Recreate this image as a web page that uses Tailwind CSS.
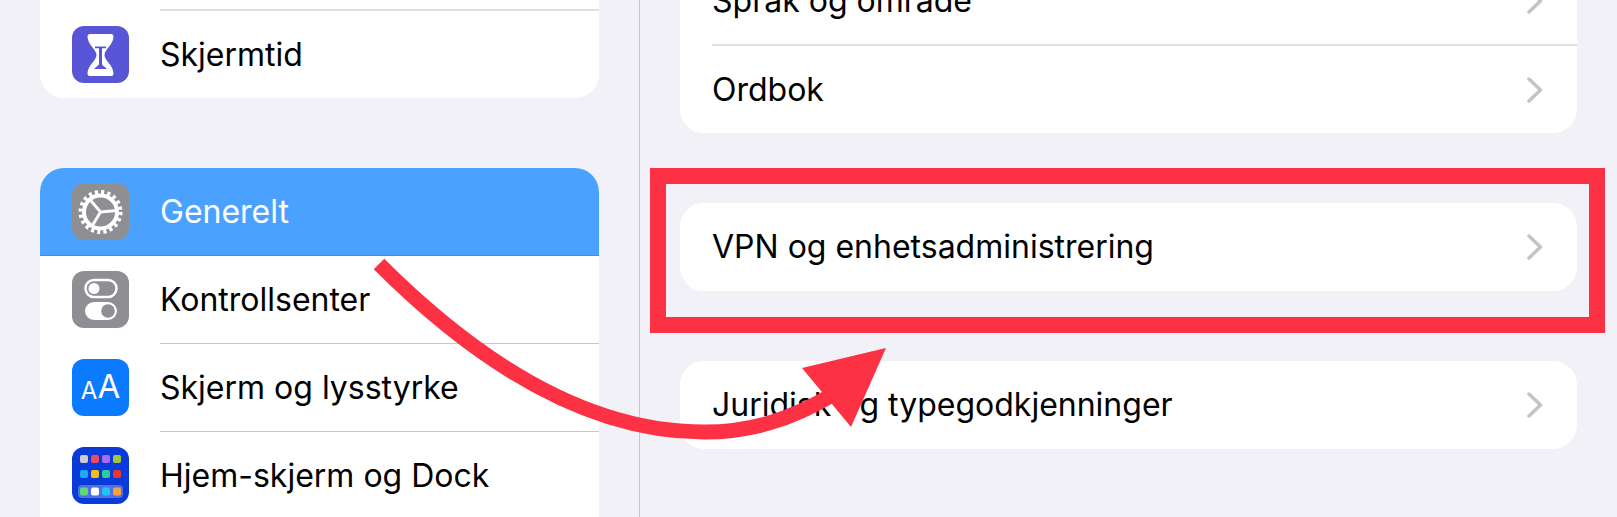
<!DOCTYPE html>
<html lang="nb">
<head>
<meta charset="UTF-8"/>
<title>Innstillinger</title>
<script src="https://cdn.jsdelivr.net/npm/@tailwindcss/browser@4"></script>
</head>
<body class="bg-[#f2f1f7]">
<div class="relative flex w-[1617px] h-[517px] overflow-hidden bg-[#f2f1f7] font-['Inter',sans-serif] text-[32px] text-black">

    <!-- sidebar -->
    <div class="w-[640px] h-full shrink-0 border-r border-[#c6c6c8] px-[40px] flex flex-col gap-[70px]">
        <div class="-mt-[78px] bg-white rounded-b-[24px] w-[559px]">
            <div class="h-[89px] border-b-2 border-[#dfdfe1] ml-[120px]"></div>
            <div class="h-[87px] flex items-center pl-[32px] gap-[31px]">
                <svg class="w-[57px] h-[57px] shrink-0" viewBox="0 0 57 57">
                    <rect width="57" height="57" rx="12" fill="#5856d6"/>
                    <path d="M18 8h21a2.500 2.500 0 0 1 2.500 2.500c0 8-9 13-9 18.500s9 10.500 9 18.500a2.500 2.500 0 0 1-2.500 2.500h-21a2.500 2.500 0 0 1-2.500-2.500c0-8 9-13 9-18.500s-9-10.500-9-18.500a2.500 2.500 0 0 1 2.500-2.500z" fill="#fff"/>
                    <path d="M23 20.500h11v1.800h-4v15.500c0 2 3 3 5 5.200h-13c2-2.200 5-3.200 5-5.200v-15.500h-4z" fill="#5856d6"/>
                </svg>
                <span>Skjermtid</span>
            </div>
        </div>

        <div class="bg-white rounded-t-[24px] w-[559px] overflow-hidden">
            <div class="h-[88px] flex items-center pl-[32px] gap-[31px] bg-[#4ba1ff] border-b border-[#3a90e8] text-white">
                <svg class="w-[57px] h-[57px] shrink-0" viewBox="0 0 57 57">
                    <rect width="57" height="57" rx="12" fill="#8e8e93"/>
                    <circle cx="28.500" cy="29" r="19.500" fill="none" stroke="#fff" stroke-width="5" stroke-dasharray="3.100 3.025"/>
                    <circle cx="28.500" cy="29" r="16.500" fill="none" stroke="#fff" stroke-width="4"/>
                    <path d="M28.500 29 17.500 16M28.500 29 45 27.500M28.500 29 19.500 44" fill="none" stroke="#fff" stroke-width="2.800"/>
                </svg>
                <span>Generelt</span>
            </div>
            <div class="h-[87px] flex items-center pl-[32px] gap-[31px]">
                <svg class="w-[57px] h-[57px] shrink-0" viewBox="0 0 57 57">
                    <rect width="57" height="57" rx="12" fill="#8e8e93"/>
                    <rect x="13.500" y="9" width="31" height="17" rx="8.500" fill="none" stroke="#fff" stroke-width="2.500"/>
                    <circle cx="22" cy="17.500" r="5.500" fill="#fff"/>
                    <rect x="13" y="31" width="32" height="18" rx="9" fill="#fff"/>
                    <circle cx="36" cy="40" r="6.800" fill="#8e8e93"/>
                </svg>
                <span>Kontrollsenter</span>
            </div>
            <div class="ml-[120px] border-t border-[#c8c8cc]"></div>
            <div class="h-[87px] flex items-center pl-[32px] gap-[31px]">
                <div class="w-[57px] h-[57px] shrink-0 rounded-[12px] bg-[#0a7aff] text-white flex items-end justify-center pb-[13px] font-normal leading-none">
                    <span class="text-[24px] leading-none">A</span><span class="text-[33px] leading-none">A</span>
                </div>
                <span>Skjerm og lysstyrke</span>
            </div>
            <div class="ml-[120px] border-t border-[#c8c8cc]"></div>
            <div class="h-[87px] flex items-center pl-[32px] gap-[31px]">
                <svg class="w-[57px] h-[57px] shrink-0" viewBox="0 0 57 57">
                    <rect width="57" height="57" rx="12" fill="#0a3bd8"/>
                    <rect x="6" y="38" width="45" height="13" rx="4" fill="#fff" fill-opacity="0.28"/>
                    <rect x="8" y="8" width="8" height="8" rx="2" fill="#cdccd2"/>
                    <rect x="19" y="8" width="8" height="8" rx="2" fill="#ee4b62"/>
                    <rect x="30" y="8" width="8" height="8" rx="2" fill="#a66cf5"/>
                    <rect x="41" y="8" width="8" height="8" rx="2" fill="#a5c63a"/>
                    <rect x="8" y="23" width="8" height="8" rx="2" fill="#1fa8f5"/>
                    <rect x="19" y="23" width="8" height="8" rx="2" fill="#fbbd12"/>
                    <rect x="30" y="23" width="8" height="8" rx="2" fill="#2ecc9a"/>
                    <rect x="41" y="23" width="8" height="8" rx="2" fill="#f0342f"/>
                    <rect x="8" y="40.500" width="8" height="8" rx="2" fill="#5dd977"/>
                    <rect x="19" y="40.500" width="8" height="8" rx="2" fill="#ffffff"/>
                    <rect x="30" y="40.500" width="8" height="8" rx="2" fill="#22c2f5"/>
                    <rect x="41" y="40.500" width="8" height="8" rx="2" fill="#f9a03f"/>
                </svg>
                <span>Hjem-skjerm og Dock</span>
            </div>
        </div>
    </div>

    <!-- detail -->
    <div class="flex-1 pl-[40px] pr-[40px] flex flex-col gap-[70px]">
        <div class="-mt-[43px] bg-white rounded-b-[24px]">
            <div class="h-[89px] ml-[32px] pr-[34px] flex items-center justify-between border-b-2 border-[#dfdfe1]">
                <span>Språk og område</span>
                <svg class="w-[16px] h-[26px]" viewBox="0 0 16 26"><path d="M2 2l11.500 11L2 24" fill="none" stroke="#c4c4c6" stroke-width="3.500" stroke-linecap="round" stroke-linejoin="round"/></svg>
            </div>
            <div class="h-[87px] pl-[32px] pr-[34px] flex items-center justify-between">
                <span>Ordbok</span>
                <svg class="w-[16px] h-[26px]" viewBox="0 0 16 26"><path d="M2 2l11.500 11L2 24" fill="none" stroke="#c4c4c6" stroke-width="3.500" stroke-linecap="round" stroke-linejoin="round"/></svg>
            </div>
        </div>
        <div class="h-[88px] bg-white rounded-[24px] pl-[32px] pr-[34px] flex items-center justify-between">
            <span>VPN og enhetsadministrering</span>
            <svg class="w-[16px] h-[26px]" viewBox="0 0 16 26"><path d="M2 2l11.500 11L2 24" fill="none" stroke="#c4c4c6" stroke-width="3.500" stroke-linecap="round" stroke-linejoin="round"/></svg>
        </div>
        <div class="h-[88px] bg-white rounded-[24px] pl-[32px] pr-[34px] flex items-center justify-between">
            <span>Juridisk og typegodkjenninger</span>
            <svg class="w-[16px] h-[26px]" viewBox="0 0 16 26"><path d="M2 2l11.500 11L2 24" fill="none" stroke="#c4c4c6" stroke-width="3.500" stroke-linecap="round" stroke-linejoin="round"/></svg>
        </div>
    </div>

    <!-- annotation -->
    <div class="absolute left-[650px] top-[168px] w-[955px] h-[165px] border-[16px] border-[#fd3144]"></div>
    <svg class="absolute left-0 top-0 w-[1617px] h-[517px] pointer-events-none" viewBox="0 0 1617 517">
        <path d="M379 264C480 365 590 432 704 432C750 432 790 420 832 395" fill="none" stroke="#fd3144" stroke-width="15"/>
        <path d="M886 348 802 368 851 427z" fill="#fd3144"/>
    </svg>
</div>
</body>
</html>
